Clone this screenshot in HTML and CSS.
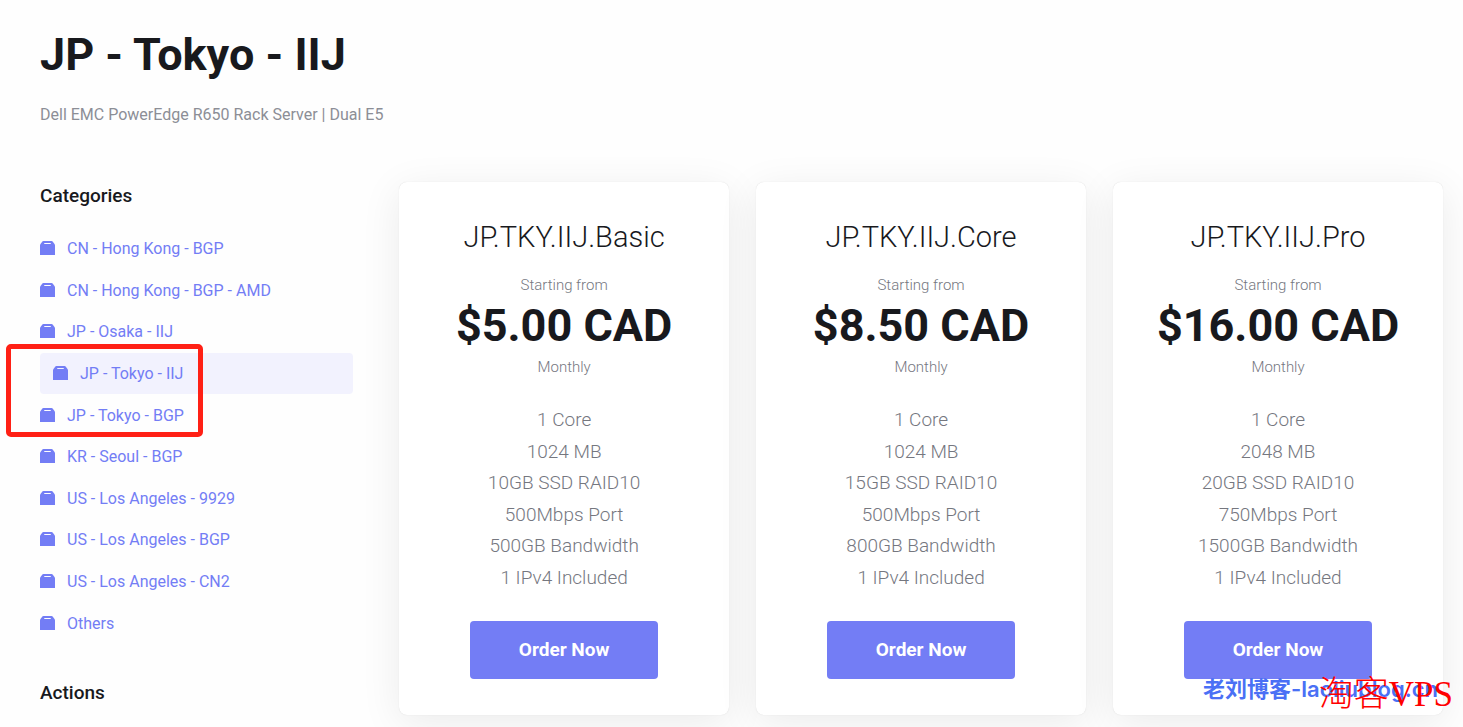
FILE: index.html
```
<!DOCTYPE html>
<html lang="en">
<head>
  <meta charset="UTF-8"/>
  <meta name="viewport" content="width=device-width,initial-scale=1.0"/>
  <title>JP - Tokyo - IIJ</title>
  <link rel="stylesheet" href="styles.css">
</head>
<body>

<svg class="sprite" aria-hidden="true">
  <symbol id="box" viewBox="0 0 15 14">
    <path fill-rule="evenodd" d="M3.500 0h8Q12.500 0 13 1l1.500 2q.5.700.5 1.500V14H0V4.500Q0 3.700.5 3L2 1Q2.500 0 3.500 0zM4.500 2L4 3h7l-.5-1z"/>
  </symbol>
</svg>

<header class="page-header">
  <h1>JP - Tokyo - IIJ</h1>
  <p>Dell EMC PowerEdge R650 Rack Server | Dual E5</p>
</header>

<div class="layout">
  <aside class="sidebar">
    <h2>Categories</h2>
    <nav class="category-nav">
      <ul class="categories">
        <li><a href="#"><svg><use href="#box"/></svg>CN - Hong Kong - BGP</a></li>
        <li><a href="#"><svg><use href="#box"/></svg>CN - Hong Kong - BGP - AMD</a></li>
        <li><a href="#"><svg><use href="#box"/></svg>JP - Osaka - IIJ</a></li>
        <li><a href="#" class="active"><svg><use href="#box"/></svg>JP - Tokyo - IIJ</a></li>
        <li><a href="#"><svg><use href="#box"/></svg>JP - Tokyo - BGP</a></li>
        <li><a href="#"><svg><use href="#box"/></svg>KR - Seoul - BGP</a></li>
        <li><a href="#"><svg><use href="#box"/></svg>US - Los Angeles - 9929</a></li>
        <li><a href="#"><svg><use href="#box"/></svg>US - Los Angeles - BGP</a></li>
        <li><a href="#"><svg><use href="#box"/></svg>US - Los Angeles - CN2</a></li>
        <li><a href="#"><svg><use href="#box"/></svg>Others</a></li>
      </ul>
      <div class="highlight"></div>
    </nav>
    <h2>Actions</h2>
  </aside>

  <main class="plans">
    <section class="plan">
      <h3>JP.TKY.IIJ.Basic</h3>
      <span class="note">Starting from</span>
      <strong class="price">$5.00 CAD</strong>
      <span class="note">Monthly</span>
      <ul class="features">
        <li>1 Core</li>
        <li>1024 MB</li>
        <li>10GB SSD RAID10</li>
        <li>500Mbps Port</li>
        <li>500GB Bandwidth</li>
        <li>1 IPv4 Included</li>
      </ul>
      <button type="button">Order Now</button>
    </section>

    <section class="plan">
      <h3>JP.TKY.IIJ.Core</h3>
      <span class="note">Starting from</span>
      <strong class="price">$8.50 CAD</strong>
      <span class="note">Monthly</span>
      <ul class="features">
        <li>1 Core</li>
        <li>1024 MB</li>
        <li>15GB SSD RAID10</li>
        <li>500Mbps Port</li>
        <li>800GB Bandwidth</li>
        <li>1 IPv4 Included</li>
      </ul>
      <button type="button">Order Now</button>
    </section>

    <section class="plan">
      <h3>JP.TKY.IIJ.Pro</h3>
      <span class="note">Starting from</span>
      <strong class="price">$16.00 CAD</strong>
      <span class="note">Monthly</span>
      <ul class="features">
        <li>1 Core</li>
        <li>2048 MB</li>
        <li>20GB SSD RAID10</li>
        <li>750Mbps Port</li>
        <li>1500GB Bandwidth</li>
        <li>1 IPv4 Included</li>
      </ul>
      <button type="button">Order Now</button>
    </section>
  </main>
</div>

<div class="watermark watermark-blue" lang="zh">老刘博客-laoliublog.cn</div>
<div class="watermark watermark-red" lang="zh">淘客VPS</div>

</body>
</html>
```
FILE: styles.css
```
* {
  margin: 0;
  padding: 0;
  box-sizing: border-box;
}

body {
  position: relative;
  min-height: 100vh;
  padding: 25px 20px 12px 40px;
  font-family: Roboto, "Noto Sans", sans-serif;
  font-size: 16px;
  background: #fefefe;
  color: #18191d;
}

ul {
  list-style: none;
}

.sprite {
  display: none;
}

.page-header {
  margin-bottom: 55px;
}

.page-header h1 {
  font-size: 45px;
  line-height: 60px;
  font-weight: 700;
  margin-bottom: 18px;
}

.page-header p {
  line-height: 24px;
  color: #8c8e96;
}

.layout {
  display: grid;
  grid-template-columns: 3fr 10fr;
  gap: 46px;
}

/* sidebar */
.sidebar h2 {
  font-size: 19px;
  line-height: 28px;
  font-weight: 500;
}

.category-nav {
  position: relative;
  margin: 18px 0 35px;
}

.categories {
  display: grid;
  grid-auto-rows: 1fr;
  min-height: 416px;
}

.categories a {
  display: flex;
  align-items: center;
  gap: 12px;
  height: 100%;
  border-radius: 4px;
  color: #737df5;
  text-decoration: none;
}

.categories a.active {
  padding-left: 13px;
  background: #f2f2fe;
}

.categories svg {
  width: 15px;
  height: 14px;
  margin-bottom: 1px;
  fill: #737df5;
}

.highlight {
  position: absolute;
  top: 116px;
  left: -34px;
  width: 197px;
  height: 93px;
  border: 5px solid #ff2015;
  border-radius: 5px;
}

/* plans */
.plans {
  display: grid;
  grid-template-columns: repeat(3, 1fr);
  align-items: start;
  gap: 27px;
}

.plan {
  display: flex;
  flex-direction: column;
  align-items: center;
  padding: 36px 24px;
  border-radius: 8px;
  background: #fff;
  box-shadow: 0 0 1px rgba(0, 0, 0, 0.15), 0 8px 40px rgba(0, 0, 0, 0.08);
  text-align: center;
}

.plan h3 {
  font-size: 29px;
  line-height: 38px;
  font-weight: 300;
  margin-bottom: 17px;
}

.note {
  font-size: 15px;
  line-height: 24px;
  font-weight: 300;
  color: #75777f;
}

.price {
  font-size: 45px;
  line-height: 58px;
  font-weight: 700;
}

.features {
  display: grid;
  grid-auto-rows: 1fr;
  min-height: 189px;
  margin: 25px 0 28px;
  font-size: 19px;
  line-height: 31px;
  font-weight: 300;
  color: #75777f;
}

.plan button {
  padding: 15px 49px;
  border: none;
  border-radius: 4px;
  background: #737df5;
  color: #fff;
  font-family: inherit;
  font-size: 19px;
  line-height: 28px;
  font-weight: 700;
  cursor: pointer;
}

/* watermarks */
.watermark {
  position: absolute;
  white-space: nowrap;
}

.watermark-blue {
  right: 25px;
  bottom: 22px;
  font-family: Inter, "Noto Sans CJK SC", sans-serif;
  font-size: 22px;
  line-height: 32px;
  font-weight: 600;
  color: #4a70f5;
}

.watermark-red {
  right: 10px;
  bottom: 12px;
  font-family: "Liberation Serif", "Noto Sans CJK SC", serif;
  font-size: 35px;
  line-height: 40px;
  font-weight: 300;
  color: #f00;
}
```
